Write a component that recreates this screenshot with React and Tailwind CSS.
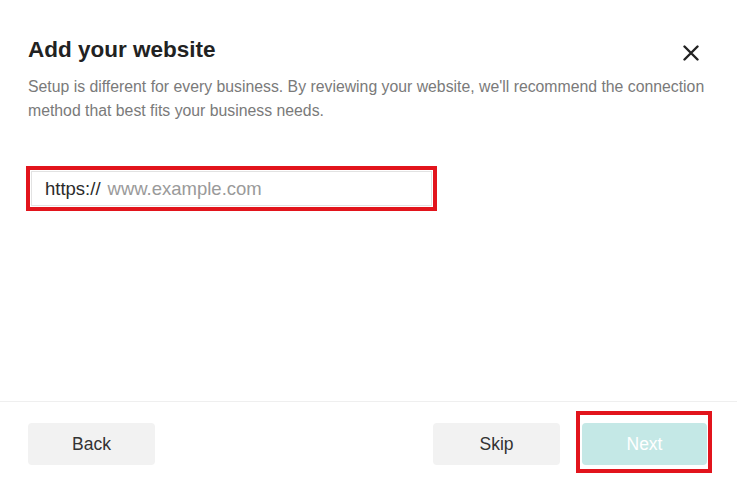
export default function App() {
  return (
    <div className="w-[737px] h-[480px] bg-white flex flex-col overflow-hidden" style={{ fontFamily: '"Liberation Sans", Arial, sans-serif' }}>
      <div className="pt-[36px] pl-[28px] pr-[38px]">
        <div className="flex items-center justify-between h-[28px]">
          <h1 className="text-[22.5px] leading-[28px] font-bold text-[#222]">Add your website</h1>
          <svg width="16" height="16" viewBox="0 0 16 16" className="mt-[6px]">
            <path d="M1.5 1.5 L14.5 14.5 M14.5 1.5 L1.5 14.5" stroke="#222" strokeWidth="2.4" strokeLinecap="round" />
          </svg>
        </div>
      </div>
      <p className="mt-[11px] pl-[28px] w-[732px] text-[15.8px] leading-[24px] text-[#7a7a7a]">
        Setup is different for every business. By reviewing your website, we'll recommend the connection method that best fits your business needs.
      </p>
      <div className="mt-[43px] ml-[26px] w-[411px] h-[45px] border-[4px] border-[#e2141c] p-[1px]">
        <div className="h-full border border-[#e2e2e2] flex items-center pl-[13px] text-[18.5px]">
          <span className="text-[#2a2a2a]">https://</span>
          <span className="ml-[7px] text-[#9a9a9a]">www.example.com</span>
        </div>
      </div>
      <div className="flex-1" />
      <div className="h-[79px] border-t border-[#efefef] flex items-start justify-between pl-[28px] pr-[25px]">
        <button className="mt-[21px] w-[127px] h-[42px] rounded-[4px] bg-[#f2f2f2] text-[17.5px] text-[#333]">Back</button>
        <div className="flex items-start">
          <button className="mt-[21px] w-[127px] h-[42px] rounded-[4px] bg-[#f2f2f2] text-[17.5px] text-[#333]">Skip</button>
          <div className="ml-[16px] mt-[9px] w-[136px] h-[62px] border-[4px] border-[#e2141c] pt-[8px] pl-[2px]">
            <button className="w-[125px] h-[42px] rounded-[4px] bg-[#c4e8e6] text-[17.5px] text-white">Next</button>
          </div>
        </div>
      </div>
    </div>
  );
}
